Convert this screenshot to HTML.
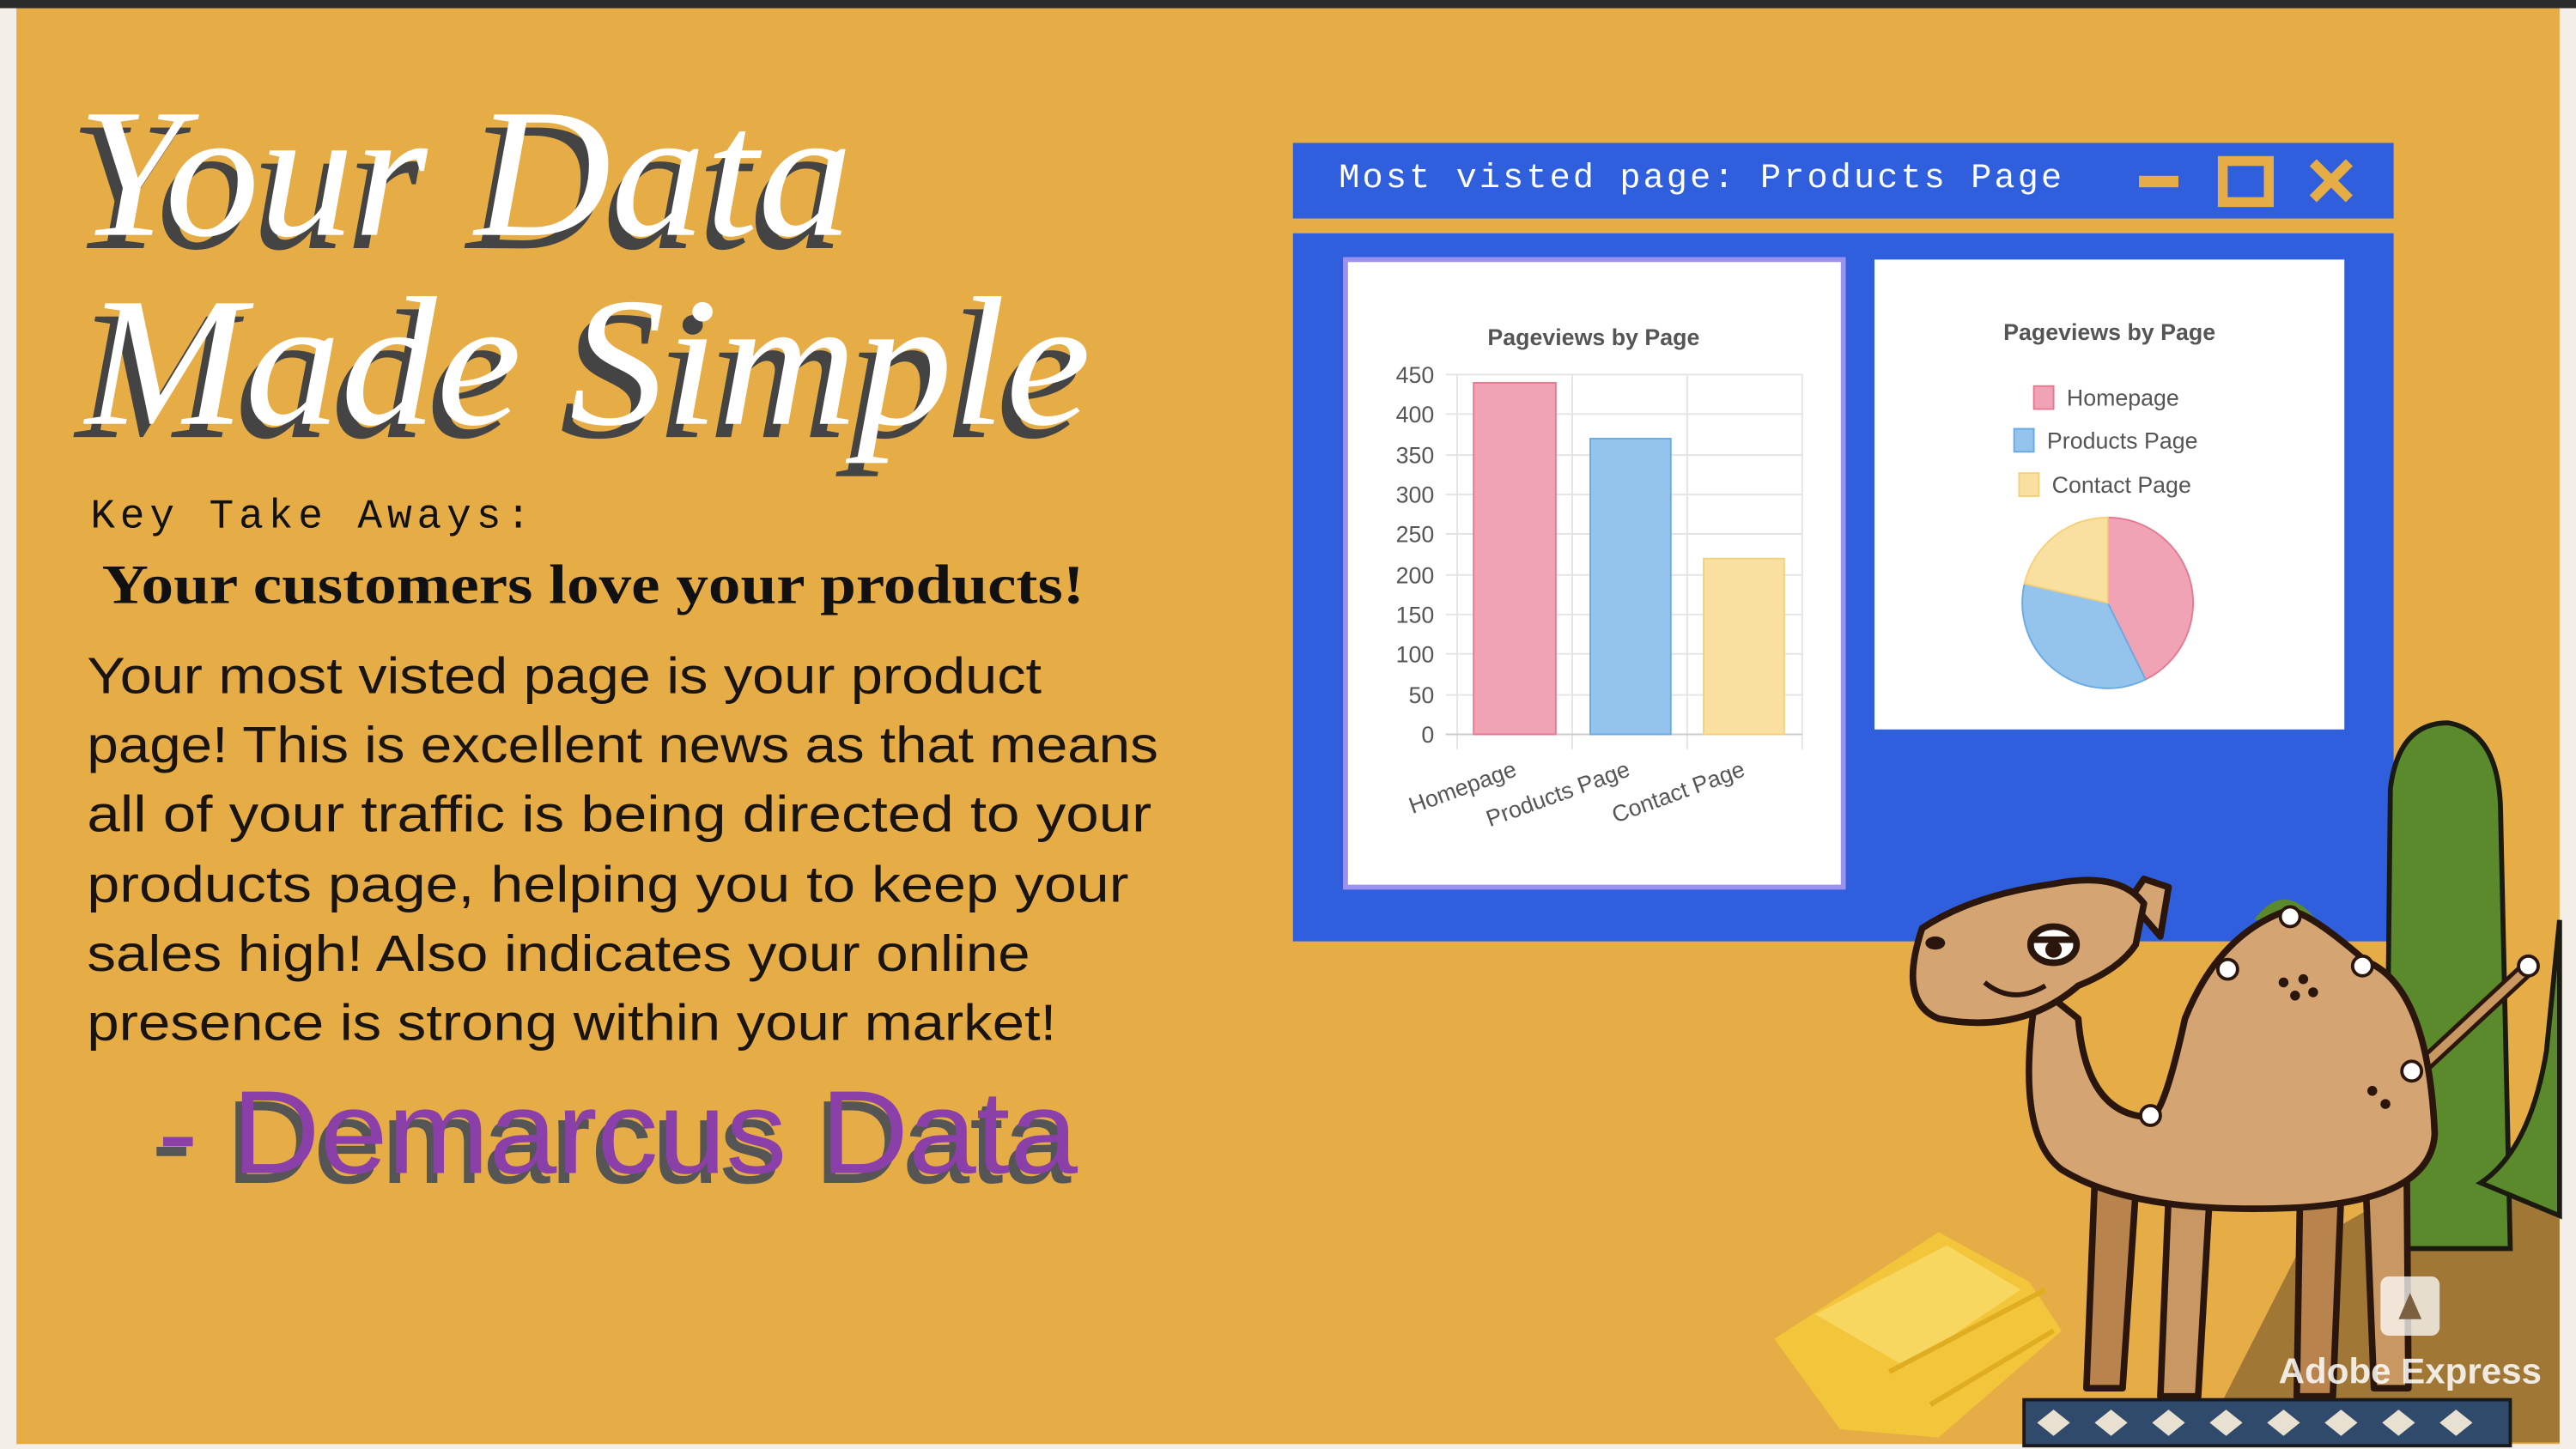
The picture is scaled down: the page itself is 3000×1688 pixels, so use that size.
<!DOCTYPE html>
<html><head><meta charset="utf-8"><style>
html,body{margin:0;padding:0;width:3000px;height:1688px;overflow:hidden;background:#e6ac45}
svg{display:block}
</style></head><body>
<svg width="3000" height="1688" viewBox="0 0 1568 882" preserveAspectRatio="none" xmlns="http://www.w3.org/2000/svg">
<rect width="1568" height="882" fill="#e6ac45"/>
<rect x="0" y="0" width="1568" height="5" fill="#2b2b2b"/>
<rect x="0" y="5" width="10" height="877" fill="#f3efe8"/>
<rect x="1558" y="5" width="10" height="877" fill="#f3efe8"/>
<rect x="0" y="879" width="1568" height="3" fill="#f3efe8"/>

<!-- title -->
<g font-family="Liberation Serif, serif" font-style="italic" font-size="112">
<text x="42" y="151" fill="#444" textLength="472" lengthAdjust="spacingAndGlyphs">Your Data</text>
<text x="47" y="143" fill="#fff" textLength="472" lengthAdjust="spacingAndGlyphs">Your Data</text>
<text x="46" y="266" fill="#444" textLength="612" lengthAdjust="spacingAndGlyphs">Made Simple</text>
<text x="52" y="258" fill="#fff" textLength="612" lengthAdjust="spacingAndGlyphs">Made Simple</text>
</g>
<text x="55" y="321" font-family="Liberation Mono, monospace" font-size="25" fill="#111" textLength="268" lengthAdjust="spacing">Key Take Aways:</text>
<text x="62" y="367" font-family="Liberation Serif, serif" font-weight="bold" font-size="34" fill="#111" textLength="598" lengthAdjust="spacingAndGlyphs">Your customers love your products!</text>
<g font-family="Liberation Sans, sans-serif" font-size="31" fill="#1a1410">
<text x="53" y="422" textLength="581" lengthAdjust="spacingAndGlyphs">Your most visted page is your product</text>
<text x="53" y="464" textLength="652" lengthAdjust="spacingAndGlyphs">page! This is excellent news as that means</text>
<text x="53" y="506" textLength="648" lengthAdjust="spacingAndGlyphs">all of your traffic is being directed to your</text>
<text x="53" y="549" textLength="634" lengthAdjust="spacingAndGlyphs">products page, helping you to keep your</text>
<text x="53" y="591" textLength="574" lengthAdjust="spacingAndGlyphs">sales high! Also indicates your online</text>
<text x="53" y="633" textLength="590" lengthAdjust="spacingAndGlyphs">presence is strong within your market!</text>
</g>
<g font-family="Liberation Sans, sans-serif" font-size="72">
<text x="92" y="720" fill="#555" textLength="560" lengthAdjust="spacingAndGlyphs">- Demarcus Data</text>
<text x="96" y="714" fill="#8b3fa8" textLength="560" lengthAdjust="spacingAndGlyphs">- Demarcus Data</text>
</g>

<!-- window -->
<rect x="787" y="87" width="670" height="46" fill="#2f5fdc"/>
<rect x="787" y="142" width="670" height="431" fill="#2f5fdc"/>
<text x="815" y="114" font-family="Liberation Mono, monospace" font-size="21" fill="#fff" textLength="440" lengthAdjust="spacing">Most visted page: Products Page</text>
<rect x="1302" y="107" width="24" height="7" fill="#e6ac45"/>
<rect x="1353" y="98" width="28" height="25" fill="none" stroke="#e6ac45" stroke-width="6"/>
<path d="M1408 99 L1430 121 M1430 99 L1408 121" stroke="#e6ac45" stroke-width="6"/>

<!-- bar chart -->
<rect x="819" y="158" width="303" height="382" fill="#fff" stroke="#9a92ee" stroke-width="3"/>
<text x="970" y="210" text-anchor="middle" font-family="Liberation Sans, sans-serif" font-weight="bold" font-size="14" fill="#555">Pageviews by Page</text>
<g stroke="#e4e4e4" stroke-width="1">
<line x1="880" y1="228" x2="1097" y2="228"/><line x1="880" y1="252" x2="1097" y2="252"/>
<line x1="880" y1="277" x2="1097" y2="277"/><line x1="880" y1="301" x2="1097" y2="301"/>
<line x1="880" y1="325" x2="1097" y2="325"/><line x1="880" y1="350" x2="1097" y2="350"/>
<line x1="880" y1="374" x2="1097" y2="374"/><line x1="880" y1="398" x2="1097" y2="398"/>
<line x1="880" y1="423" x2="1097" y2="423"/>
<line x1="887" y1="228" x2="887" y2="456"/><line x1="957" y1="228" x2="957" y2="456"/>
<line x1="1027" y1="228" x2="1027" y2="456"/><line x1="1097" y1="228" x2="1097" y2="456"/>
</g>
<line x1="880" y1="447" x2="1097" y2="447" stroke="#ccc"/>
<g font-family="Liberation Sans, sans-serif" font-size="14" fill="#555" text-anchor="end">
<text x="873" y="233">450</text><text x="873" y="257">400</text><text x="873" y="282">350</text>
<text x="873" y="306">300</text><text x="873" y="330">250</text><text x="873" y="355">200</text>
<text x="873" y="379">150</text><text x="873" y="403">100</text><text x="873" y="428">50</text>
<text x="873" y="452">0</text>
</g>
<rect x="897" y="233" width="50" height="214" fill="#f0a3b4" stroke="#e8788f"/>
<rect x="968" y="267" width="49" height="180" fill="#94c3ec" stroke="#6aaae4"/>
<rect x="1037" y="340" width="49" height="107" fill="#f9e0a0" stroke="#f5d07a"/>
<g font-family="Liberation Sans, sans-serif" font-size="14" fill="#555" text-anchor="end">
<text transform="translate(924,472) rotate(-20)">Homepage</text>
<text transform="translate(993,472) rotate(-20)">Products Page</text>
<text transform="translate(1063,472) rotate(-20)">Contact Page</text>
</g>

<!-- pie chart -->
<rect x="1141" y="158" width="286" height="286" fill="#fff"/>
<text x="1284" y="207" text-anchor="middle" font-family="Liberation Sans, sans-serif" font-weight="bold" font-size="14" fill="#555">Pageviews by Page</text>
<g font-family="Liberation Sans, sans-serif" font-size="14" fill="#555">
<rect x="1238" y="235" width="12" height="14" fill="#f0a3b4" stroke="#e8788f"/><text x="1258" y="247">Homepage</text>
<rect x="1226" y="261" width="12" height="14" fill="#94c3ec" stroke="#6aaae4"/><text x="1246" y="273">Products Page</text>
<rect x="1229" y="288" width="12" height="14" fill="#f9e0a0" stroke="#f5d07a"/><text x="1249" y="300">Contact Page</text>
</g>
<path d="M1283 367 L1283 315 A52 52 0 0 1 1306 413.6 Z" fill="#f0a3b4" stroke="#e8788f"/>
<path d="M1283 367 L1306 413.6 A52 52 0 0 1 1232.3 355.3 Z" fill="#94c3ec" stroke="#6aaae4"/>
<path d="M1283 367 L1232.3 355.3 A52 52 0 0 1 1283 315 Z" fill="#f9e0a0" stroke="#f5d07a"/>

<!-- scene -->
<path d="M1340 878 L1400 760 L1470 720 L1558 700 L1558 878 Z" fill="#8a6530" opacity="0.75"/>
<!-- cactus -->
<path d="M1452 760 L1455 480 Q1460 440 1490 440 Q1520 445 1522 490 L1528 760 Z" fill="#5b8a2c" stroke="#1a1a10" stroke-width="3"/>
<path d="M1510 720 Q1540 700 1550 640 L1558 560 L1558 740 Z" fill="#5b8a2c" stroke="#1a1a10" stroke-width="3"/>
<path d="M1372 560 Q1390 535 1410 560 Z" fill="#5b8a2c"/>
<!-- gold bars -->
<path d="M1080 815 L1180 750 L1235 780 L1255 810 L1180 875 L1120 870 Z" fill="#f3c53a"/>
<path d="M1105 800 L1185 758 L1230 785 L1160 832 Z" fill="#f7d760"/>
<path d="M1150 835 L1245 785 M1175 855 L1250 810" stroke="#e0ac20" stroke-width="3"/>
<!-- camel -->
<g stroke="#2a160c" stroke-width="4" stroke-linejoin="round">
<path d="M1275 720 L1270 845 L1292 845 L1300 725 Z" fill="#b8834c"/>
<path d="M1320 728 L1315 850 L1338 850 L1345 728 Z" fill="#c99761"/>
<path d="M1400 728 L1398 850 L1420 850 L1425 728 Z" fill="#b8834c"/>
<path d="M1440 720 L1445 845 L1466 845 L1465 715 Z" fill="#c99761"/>
<path d="M1468 655 L1538 590" stroke-width="10"/>
<path d="M1468 655 L1538 590" stroke="#c99761" stroke-width="5"/>
<path d="M1240 600 Q1225 690 1255 712 Q1300 740 1400 735 Q1480 730 1482 690 Q1478 600 1440 585 Q1400 550 1390 555 Q1350 570 1330 620 Q1318 675 1310 680 Q1270 680 1265 620 Z" fill="#d4a472"/>
<path d="M1296 548 L1305 535 L1320 540 L1315 570 Z" fill="#d4a472"/>
<path d="M1170 565 Q1155 610 1180 620 Q1230 630 1265 600 Q1290 590 1300 575 L1305 550 Q1290 530 1250 538 Q1200 545 1170 565 Z" fill="#d4a472"/>
<ellipse cx="1250" cy="575" rx="14" ry="11" fill="#fff"/>
</g>
<path d="M1237 572 L1264 572" stroke="#2a160c" stroke-width="4"/>
<circle cx="1250" cy="578" r="5" fill="#2a160c"/>
<ellipse cx="1178" cy="574" rx="6" ry="4" fill="#2a160c"/>
<path d="M1208 598 Q1225 612 1245 600" fill="none" stroke="#2a160c" stroke-width="3"/>
<g fill="#fff" stroke="#2a160c" stroke-width="2">
<circle cx="1309" cy="679" r="6"/><circle cx="1356" cy="590" r="6"/><circle cx="1394" cy="558" r="6"/>
<circle cx="1438" cy="588" r="6"/><circle cx="1468" cy="652" r="6"/><circle cx="1539" cy="588" r="6"/>
</g>
<g fill="#2a160c"><circle cx="1390" cy="598" r="3"/><circle cx="1402" cy="596" r="3"/><circle cx="1397" cy="606" r="3"/><circle cx="1408" cy="604" r="3"/><circle cx="1444" cy="664" r="3"/><circle cx="1452" cy="672" r="3"/></g>
<!-- rug -->
<rect x="1232" y="852" width="296" height="28" fill="#2f4a6a" stroke="#1a1a1a" stroke-width="2"/>
<path d="M1240 866 l10 -8 l10 8 l-10 8 Z M1275 866 l10 -8 l10 8 l-10 8 Z M1310 866 l10 -8 l10 8 l-10 8 Z M1345 866 l10 -8 l10 8 l-10 8 Z M1380 866 l10 -8 l10 8 l-10 8 Z M1415 866 l10 -8 l10 8 l-10 8 Z M1450 866 l10 -8 l10 8 l-10 8 Z M1485 866 l10 -8 l10 8 l-10 8 Z" fill="#e8e0d0"/>
<!-- watermark -->
<rect x="1449" y="777" width="36" height="36" rx="5" fill="#fff" opacity="0.75"/>
<path d="M1460 803 L1467 787 L1474 803 Z" fill="#7a6040"/>
<text x="1467" y="842" text-anchor="middle" font-family="Liberation Sans, sans-serif" font-weight="bold" font-size="22" fill="#fff" opacity="0.85">Adobe Express</text>
</svg>
</body></html>
